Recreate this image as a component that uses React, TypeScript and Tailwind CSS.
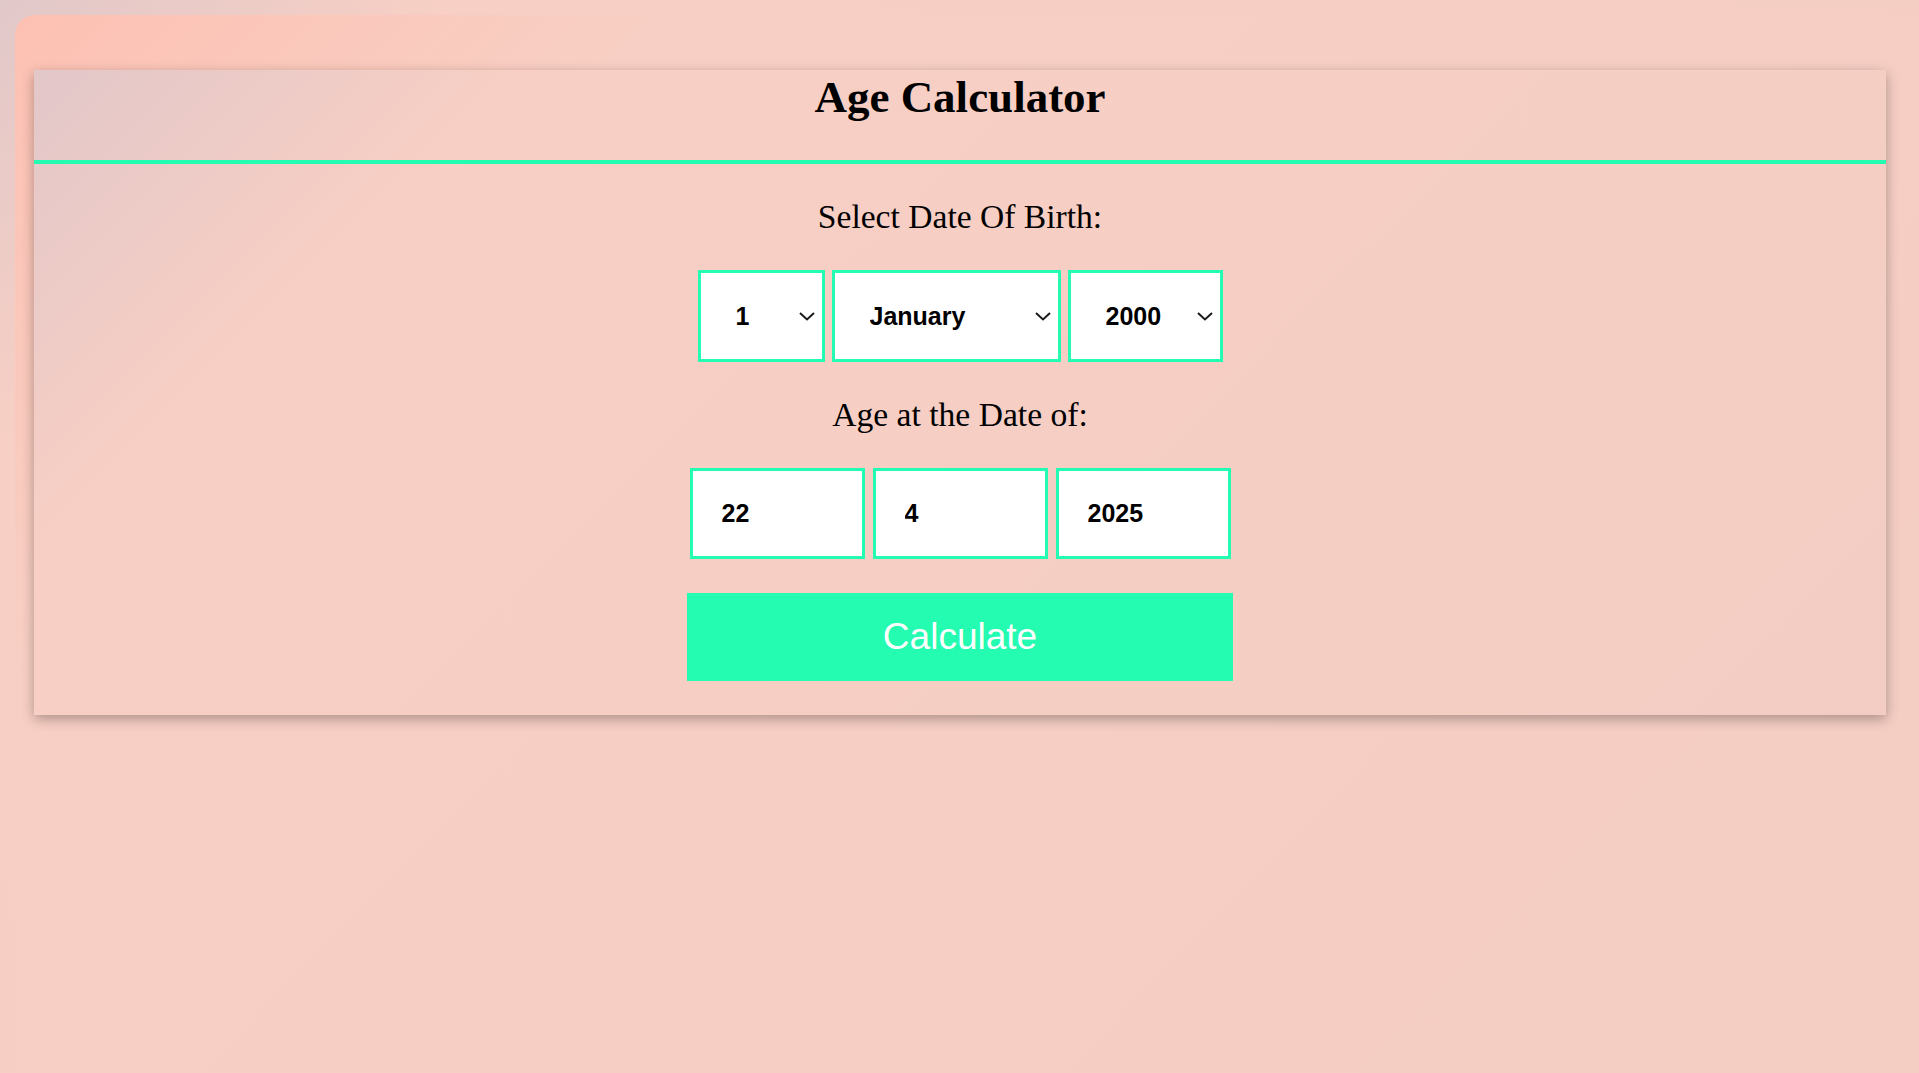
import React from "react";

const months = [
  "January",
  "February",
  "March",
  "April",
  "May",
  "June",
  "July",
  "August",
  "September",
  "October",
  "November",
  "December",
];

const days = Array.from({ length: 31 }, (_, i) => i + 1);
const years = Array.from({ length: 126 }, (_, i) => 1900 + i);

interface PickerProps {
  width: string;
  value: string;
  options: (string | number)[];
}

const Picker: React.FC<PickerProps> = ({ width, value, options }) => {
  return (
    <div className={`relative ${width}`}>
      <select
        defaultValue={value}
        className="h-[92px] w-full appearance-none border-[3px] border-[#24fdb1] bg-white pl-[35px] pt-[2px] font-['Liberation_Sans',Arial,sans-serif] text-[25px] font-bold text-black outline-none"
      >
        {options.map((o) => (
          <option key={o} value={String(o)}>
            {o}
          </option>
        ))}
      </select>
      <svg
        className="pointer-events-none absolute right-[10px] top-[42px]"
        width="16"
        height="9"
        viewBox="0 0 16 9"
        fill="none"
      >
        <path d="M1 1L8 7.5L15 1" stroke="#1a1a1a" strokeWidth="2" />
      </svg>
    </div>
  );
};

const Field: React.FC<{ value: string }> = ({ value }) => (
  <input
    type="text"
    defaultValue={value}
    className="h-[91px] w-[175px] border-[3px] border-[#24fdb1] bg-white pl-[29px] font-['Liberation_Sans',Arial,sans-serif] text-[25px] font-bold text-black outline-none"
  />
);

const App: React.FC = () => {
  return (
    <div className="min-h-screen overflow-hidden bg-[linear-gradient(135deg,#e1c8c9_0%,#f7cfc4_15%,#f4cdc3_100%)] pl-[15px] pt-[15px]">
      <div className="min-h-[1058px] rounded-tl-[20px] bg-[linear-gradient(135deg,#fdc1b3_0%,#f8cfc4_22%,#f4cdc3_100%)] pl-[19px] pt-[55px]">
        <div className="w-[1852px] bg-[linear-gradient(135deg,#e2c7c9_0%,#f8cfc4_20%,#f3cdc3_100%)] font-['Liberation_Serif','Times_New_Roman',serif] text-black shadow-[0_4px_12px_rgba(0,0,0,0.3)]">
          <div className="h-[94px] border-b-4 border-[#24fdb1] text-center">
            <h1 className="pt-[1px] text-[45px] font-bold leading-[52px]">Age Calculator</h1>
          </div>
          <div className="flex flex-col items-center gap-[34px] pb-[34px] pt-[34px]">
            <div className="text-[33.6px] leading-[38.6px]">Select Date Of Birth:</div>
            <div className="-mt-[1px] flex gap-[7px]">
              <Picker width="w-[127px]" value="1" options={days} />
              <Picker width="w-[229px]" value="January" options={months} />
              <Picker width="w-[155px]" value="2000" options={years} />
            </div>
            <div className="text-[33.6px] leading-[38.6px]">Age at the Date of:</div>
            <div className="flex gap-[8px]">
              <Field value="22" />
              <Field value="4" />
              <Field value="2025" />
            </div>
            <button className="h-[88px] w-[546px] bg-[#24fdb1] font-['Liberation_Sans',Arial,sans-serif] text-[37px] text-white">
              Calculate
            </button>
          </div>
        </div>
      </div>
    </div>
  );
};

export default App;
